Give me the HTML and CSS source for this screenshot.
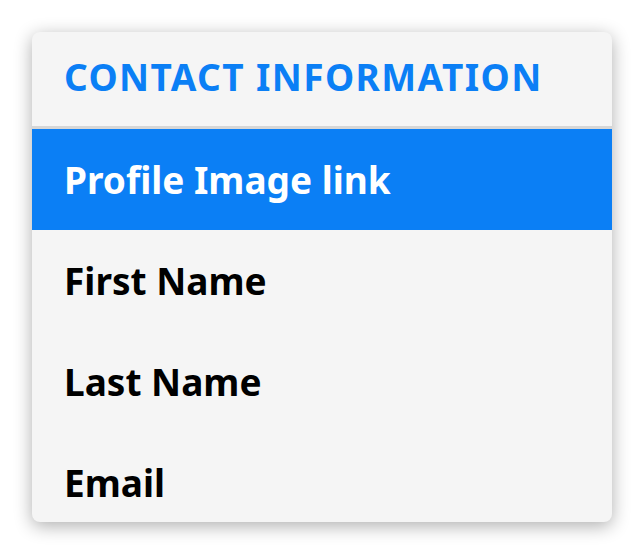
FILE: index.html
```html
<!DOCTYPE html>
<html lang="en">
  <head>
    <meta charset="UTF-8" />
    <meta name="viewport" content="width=device-width, initial-scale=1.0" />
    <title>Contact Information</title>
    <link rel="stylesheet" href="styles.css">
  </head>
  <body>
    <div class="menu">
      <div class="menu-header">CONTACT INFORMATION</div>
      <ul class="menu-list">
        <li class="menu-item active">Profile Image link</li>
        <li class="menu-item">First Name</li>
        <li class="menu-item">Last Name</li>
        <li class="menu-item">Email</li>
      </ul>
    </div>
  </body>
</html>
```

FILE: styles.css
```css
/* General Reset */
* {
  margin: 0;
  padding: 0;
  box-sizing: border-box;
}

body {
  font-family: 'Noto Sans', 'Open Sans', sans-serif;
  background-color: #fff;
  padding: 32px;
}

.menu {
  width: 580px;
  height: 490px;
  background-color: #f5f5f5;
  border-radius: 8px;
  box-shadow: 0 4px 18px rgba(0, 0, 0, 0.32);
  overflow: hidden;
}

.menu-header {
  height: 97px;
  padding: 24px 32px 0;
  font-size: 37px;
  font-weight: 700;
  line-height: 42px;
  letter-spacing: 1.4px;
  color: #0b7ff5;
  border-bottom: 3px solid #d6d6d6;
}

.menu-list {
  list-style: none;
}

.menu-item {
  height: 101px;
  padding-left: 32px;
  display: flex;
  align-items: center;
  font-size: 37px;
  font-weight: 700;
  color: #000;
}

.menu-item.active {
  background-color: #0b7ff5;
  color: #fff;
}
```
